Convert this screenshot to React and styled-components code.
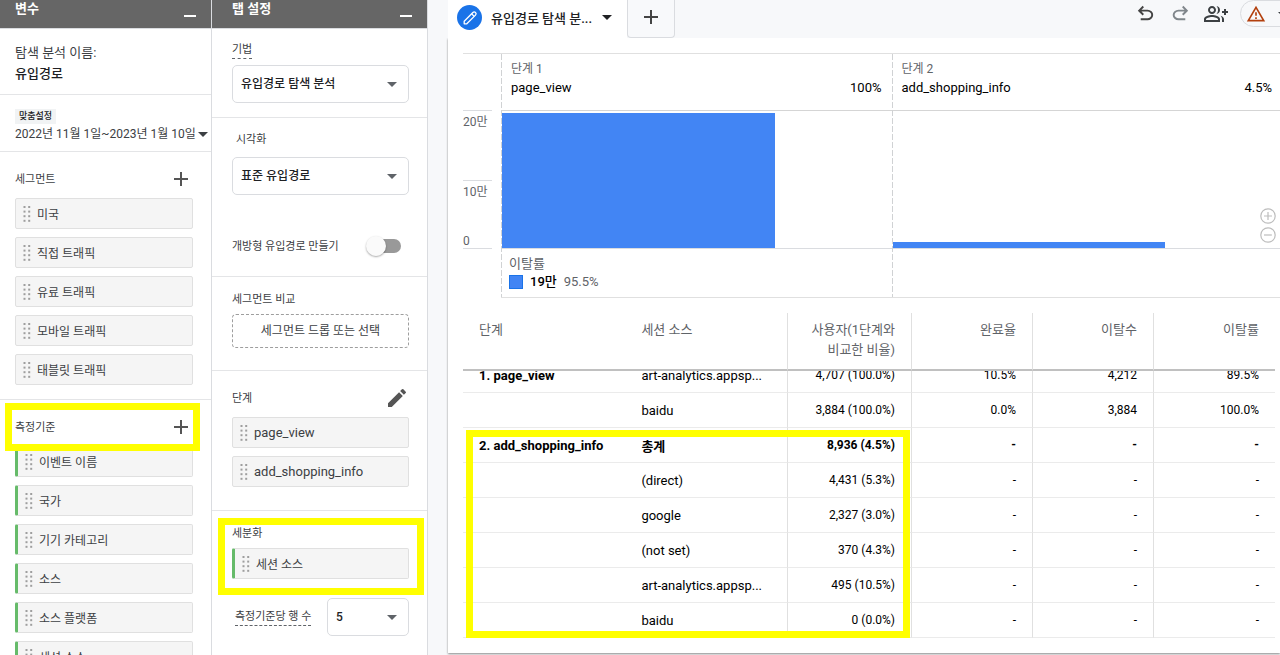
import React, { useLayoutEffect, useRef } from 'react'
import styled, { createGlobalStyle } from 'styled-components'
import {
  MdAdd,
  MdArrowDropDown,
  MdModeEdit,
  MdOutlineGroupAdd,
  MdOutlineWarningAmber,
} from 'react-icons/md'

const GlobalStyle = createGlobalStyle`
  * { box-sizing: border-box; }
  body {
    margin: 0;
    overflow: hidden;
    background-color: #F7F8FA;
    color: #3C4043;
    font-family: Roboto, "Noto Sans CJK KR", sans-serif;
    font-size: 12px;
  }
  button, input, select { font: inherit; color: inherit; }
  svg { display: block; flex: none; }
`
const Page = styled.div`
  display: flex;
  height: 100vh;
  overflow: hidden;
`

/* side panels */
const Panel = styled.aside`
  flex: none;
  width: ${({width}) => width}px;
  overflow: hidden;
  background-color: #FFF;
  border-right: 1px solid #DADCE0;
`
const PanelHeader = styled.header`
  display: flex;
  justify-content: space-between;
  height: 29px;
  padding: 0 15px 0 ${({inset}) => inset}px;
  background-color: #666;
  border-bottom: 1px solid #DADCE0;
  color: #FFF;
  & h2 {
    margin: 0;
    font-size: 13px;
    font-weight: 700;
    line-height: 17px;
  }
`
const Collapse = styled.button`
  width: 12px;
  height: 17px;
  padding: 0;
  background: none;
  border: 0;
  border-bottom: 2px solid #FFF;
`
const Section = styled.section`
  position: relative;
  padding: ${({top}) => top}px 18px ${({bottom}) => bottom || 0}px ${({inset}) => inset}px;
  border-bottom: ${({last}) => last ? 0 : 1}px solid #E4E5E7;
`
const SectionHead = styled.div`
  display: flex;
  align-items: center;
  justify-content: space-between;
  height: 24px;
  margin-bottom: 7px;
  & h3 { padding-top: 2px; }
`
const Title = styled.h3`
  margin: 0;
  font-size: 11px;
  font-weight: 400;
  line-height: 16px;
`
const BlockTitle = styled(Title)`
  margin-bottom: 5px;
  line-height: 18px;
`
const IconButton = styled.button`
  display: flex;
  padding: 0;
  background: none;
  border: 0;
  color: ${({color}) => color || '#555'};
`
const NameLabel = styled.label`
  display: block;
  font-size: 13px;
  line-height: 20px;
`
const NameInput = styled.input`
  display: block;
  width: 100%;
  height: 20px;
  padding: 0 0 2px;
  background: none;
  border: 0;
  outline: 0;
  color: #202124;
  font-size: 13px;
  font-weight: 500;
`
const Chip = styled.div`
  width: max-content;
  padding: 0 4px;
  background-color: #F1F3F4;
  color: #202124;
  font-size: 9px;
  font-weight: 500;
  line-height: 15px;
`
const DateButton = styled.button`
  display: flex;
  align-items: center;
  gap: 2px;
  padding: 0;
  background: none;
  border: 0;
  font-size: 12px;
  line-height: 20px;
  white-space: nowrap;
`
const Caret = styled.span`
  flex: none;
  border: solid transparent;
  border-width: 5px 5px 0;
  border-top-color: ${({color}) => color || '#5F6368'};
`
const List = styled.ul`
  display: grid;
  gap: 8px;
  margin: 0;
  padding: 0;
  list-style: none;
`
const Item = styled.li`
  display: flex;
  align-items: center;
  gap: 4px;
  height: 31px;
  padding-left: 7px;
  background-color: #F5F5F5;
  border: 1px solid #E0E0E0;
  border-left: ${({metric}) => metric ? '3px solid #66BB6A' : '1px solid #E0E0E0'};
  border-radius: 2px;
  font-size: ${({big}) => big ? 13 : 12}px;
  white-space: nowrap;
`
const Field = styled.div`
  display: flex;
  flex-direction: column;
  align-items: flex-start;
  gap: ${({gap}) => gap}px;
`
const FieldLabel = styled.label`
  margin-left: ${({indent}) => indent || 0}px;
  padding-top: 1px;
  border-bottom: ${({hint}) => hint ? '1px dashed #5F6368' : '0'};
  font-size: 11px;
  line-height: 16px;
`
const SelectBox = styled.div`
  position: relative;
  width: ${({width}) => width || '100%'};
  & select {
    width: 100%;
    height: 38px;
    padding: 0 24px 0 8px;
    appearance: none;
    background-color: #FFF;
    border: 1px solid #DADCE0;
    border-radius: 5px;
    color: #202124;
    font-size: 12px;
    font-weight: 500;
  }
  & ${Caret} {
    position: absolute;
    top: 17px;
    right: 12px;
    pointer-events: none;
  }
`
const SwitchRow = styled.div`
  display: flex;
  align-items: center;
  justify-content: space-between;
  height: 24px;
  margin-top: 39px;
  padding-right: 8px;
`
const Switch = styled.input`
  position: relative;
  width: 32px;
  height: 14px;
  margin: 0;
  appearance: none;
  background-color: #999;
  border-radius: 7px;
  &::before {
    content: '';
    position: absolute;
    top: -3px;
    left: -3px;
    width: 20px;
    height: 20px;
    background-color: #FAFAFA;
    border-radius: 50%;
    box-shadow: 0 1px 2px rgba(0, 0, 0, .35);
  }
`
const DropZone = styled.button`
  width: 100%;
  height: 34px;
  padding: 0 0 3px;
  background: none;
  border: 1px dashed #9E9E9E;
  border-radius: 4px;
  font-size: 12px;
`
const RowsField = styled.div`
  display: flex;
  align-items: center;
  justify-content: space-between;
  margin-top: 19px;
`

/* yellow marker frame drawn over a block */
const Marker = styled.div`
  position: absolute;
  top: ${({top}) => top}px;
  right: ${({right}) => right};
  bottom: ${({bottom}) => bottom || 'auto'};
  left: ${({left}) => left}px;
  height: ${({height}) => height ? `${height}px` : 'auto'};
  border: 7px solid #FF0;
  pointer-events: none;
  z-index: 3;
`

/* report */
const Main = styled.main`
  display: flex;
  flex: 1;
  flex-direction: column;
  min-width: 0;
  margin-left: 20px;
`
const TopBar = styled.div`
  display: flex;
  height: 38px;
`
const Tab = styled.button`
  display: flex;
  align-items: center;
  gap: 9px;
  width: 179px;
  padding: 0 0 3px 9px;
  background-color: #FFF;
  border: 0;
  color: #202124;
  font-size: 13px;
  font-weight: 500;
  & ${Caret} { margin-left: 1px; }
`
const Badge = styled.span`
  display: flex;
  align-items: center;
  justify-content: center;
  width: 25px;
  height: 25px;
  background-color: #1A73E8;
  border-radius: 50%;
  color: #FFF;
`
const AddTab = styled.button`
  display: flex;
  align-items: center;
  justify-content: center;
  width: 48px;
  padding: 0 0 3px;
  background-color: #F8F9FB;
  border: 1px solid #DADCE0;
  border-top: 0;
  border-radius: 0 0 4px 4px;
  color: #444;
`
const Actions = styled.div`
  display: flex;
  flex: 1;
  align-items: center;
  justify-content: flex-end;
  gap: 12px;
  height: 27px;
  margin-right: -20px;
`
const Status = styled.button`
  display: flex;
  align-items: center;
  gap: 5px;
  width: 60px;
  height: 27px;
  padding: 0 0 0 5px;
  background: none;
  border: 1px solid #DADCE0;
  border-radius: 14px;
  color: #3C4043;
`
const Card = styled.div`
  display: flex;
  flex: 1;
  flex-direction: column;
  min-height: 0;
  margin-bottom: 2px;
  padding: 15px 0 15px 15px;
  background-color: #FFF;
  box-shadow: 0 1px 2px rgba(0, 0, 0, .45);
  clip-path: inset(0 0 -4px -4px);
`
const Chart = styled.div`
  position: relative;
  display: grid;
  grid-template-columns: 38px 1fr 1fr;
  margin-right: -2px;
`
const Axis = styled.div`
  display: flex;
  flex-direction: column;
  border-top: 1px solid #E0E0E0;
  color: #5F6368;
  font-size: 12px;
`
const Tick = styled.div`
  display: flex;
  flex-direction: column;
  justify-content: space-between;
  width: 29px;
  height: ${({height}) => height}px;
  border-bottom: 1px solid #DADCE0;
  line-height: 22px;
  & span:last-child:not(:first-child) { line-height: 13px; }
`
const Step = styled.div`
  position: relative;
  border-top: 1px solid #E0E0E0;
  border-bottom: 1px solid #E0E0E0;
  &::before {
    content: '';
    position: absolute;
    top: 0;
    bottom: 0;
    left: 0;
    width: 1px;
    background-image: repeating-linear-gradient(#D0D2D4 0 6px, transparent 6px 8px);
  }
`
const StepHead = styled.div`
  height: 57px;
  padding: 6px 10px 0;
  border-bottom: 1px solid #D5D5D5;
`
const StepNo = styled.div`
  color: #5F6368;
  font-size: 12px;
  line-height: 18px;
`
const StepName = styled.div`
  display: flex;
  justify-content: space-between;
  color: #000;
  font-size: 13px;
  line-height: 20px;
`
const Plot = styled.div`
  display: flex;
  align-items: flex-end;
  height: 138px;
  padding-left: 1px;
  border-bottom: 1px solid #DADCE0;
`
const Bar = styled.div`
  width: 70%;
  background-color: #4285F4;
`
const StepFoot = styled.div`
  height: 48px;
  padding: 6px 8px 0;
  font-size: 13px;
  line-height: 18px;
  color: #5F6368;
`
const Legend = styled.div`
  display: flex;
  align-items: center;
  gap: 7px;
  & i {
    width: 14px;
    height: 14px;
    background-color: #4285F4;
    border: 1px solid #1A73E8;
  }
  & b {
    color: #000;
    font-weight: 500;
  }
`
const ZoomButtons = styled.div`
  position: absolute;
  top: 155px;
  right: 6px;
  display: grid;
  gap: 3px;
`
const TableArea = styled.div`
  position: relative;
  flex: 1;
  min-height: 0;
  margin: 15px 5px 0 0;
`
const Scroller = styled.div`
  height: 100%;
  overflow-y: auto;
  scrollbar-width: none;
`
const Table = styled.table`
  width: 100%;
  border-collapse: separate;
  border-spacing: 0;
  table-layout: fixed;
  color: #000;
  font-size: 13px;
`
const HeadCell = styled.th`
  position: sticky;
  top: 0;
  z-index: 1;
  width: ${({w}) => w};
  height: 58px;
  padding: 7px 16px 0;
  background-color: #FFF;
  border-right: ${({line}) => line ? 1 : 0}px solid #E0E0E0;
  border-bottom: 2px solid #C0C0C0;
  color: #5F6368;
  font-weight: 400;
  line-height: 20px;
  text-align: ${({num}) => num ? 'right' : 'left'};
  vertical-align: top;
  word-break: keep-all;
`
const Cell = styled.td`
  height: 35px;
  padding: 0 ${({flush}) => flush ? 0 : 16}px 0 16px;
  border-right: ${({line}) => line ? 1 : 0}px solid #E0E0E0;
  border-bottom: 1px solid #EBEBEB;
  font-weight: ${({bold}) => bold ? 700 : 400};
  font-size: ${({num}) => num ? 12 : 13}px;
  text-align: ${({num}) => num ? 'right' : 'left'};
  white-space: nowrap;
`

const segments = ['미국', '직접 트래픽', '유료 트래픽', '모바일 트래픽', '태블릿 트래픽']
const dimensions = ['이벤트 이름', '국가', '기기 카테고리', '소스', '소스 플랫폼', '세션 소스']

const steps = [
  { no: '단계 1', name: 'page_view', rate: '100%', height: 135, lost: '19만', lostRate: '95.5%' },
  { no: '단계 2', name: 'add_shopping_info', rate: '4.5%', height: 6 },
]

const columns = [
  { name: '단계', w: '20%' },
  { name: '세션 소스', w: '20%', line: true },
  { name: '사용자(1단계와 비교한 비율)', w: '15.3%', line: true, num: true },
  { name: '완료율', w: '14.9%', line: true, num: true },
  { name: '이탈수', w: '14.9%', line: true, num: true },
  { name: '이탈률', w: '14.9%', num: true },
]

const rows = [
  ['1. page_view', 'art-analytics.appsp...', '4,707 (100.0%)', '10.5%', '4,212', '89.5%'],
  ['', 'baidu', '3,884 (100.0%)', '0.0%', '3,884', '100.0%'],
  ['2. add_shopping_info', '총계', '8,936 (4.5%)', '-', '-', '-'],
  ['', '(direct)', '4,431 (5.3%)', '-', '-', '-'],
  ['', 'google', '2,327 (3.0%)', '-', '-', '-'],
  ['', '(not set)', '370 (4.3%)', '-', '-', '-'],
  ['', 'art-analytics.appsp...', '495 (10.5%)', '-', '-', '-'],
  ['', 'baidu', '0 (0.0%)', '-', '-', '-'],
]
const totalRow = 2

const Grip = () => (
  <svg width="10" height="16" viewBox="0 0 10 16" fill="#9E9E9E">
    {[0, 1, 2, 3].map(i => (
      <g key={i}>
        <rect x="0.5" y={i * 4.6} width="2" height="2" />
        <rect x="5.2" y={i * 4.6} width="2" height="2" />
      </g>
    ))}
  </svg>
)

const PencilOutline = () => (
  <svg width="16" height="16" viewBox="0 0 16 16" fill="none" stroke="currentColor" strokeWidth="1.3" strokeLinejoin="round">
    <path d="M2.2 13.8v-2.6l8.7-8.7a1.8 1.8 0 0 1 2.6 2.6l-8.7 8.7z" />
    <path d="M9.6 3.8l2.6 2.6" />
  </svg>
)

const Undo = () => (
  <svg width="23" height="23" viewBox="0 -960 960 960" fill="currentColor">
    <path d="M280-200v-80h284q63 0 109.5-40T720-420q0-60-46.5-100T564-560H312l104 104-56 56-200-200 200-200 56 56-104 104h252q97 0 169.5 63T800-420q0 94-72.5 157T564-200H280Z" />
  </svg>
)

const Redo = () => (
  <svg width="23" height="23" viewBox="0 -960 960 960" fill="currentColor">
    <path d="M396-200q-97 0-169.5-63T154-420q0-94 72.5-157T396-640h252L544-744l56-56 200 200-200 200-56-56 104-104H396q-63 0-109.5 40T234-420q0 60 53 100T396-280h284v80H396Z" />
  </svg>
)

const CircleIcon = ({plus}) => (
  <svg width="16" height="16" viewBox="0 0 16 16" fill="none" stroke="currentColor" strokeWidth="1.2">
    <circle cx="8" cy="8" r="7.2" />
    <path d={plus ? 'M4 8h8M8 4v8' : 'M4 8h8'} />
  </svg>
)

const ItemList = ({items, metric, big}) => (
  <List>
    {items.map(name => (
      <Item key={name} metric={metric} big={big}>
        <Grip />
        <span>{name}</span>
      </Item>
    ))}
  </List>
)

const Select = ({id, value, width}) => (
  <SelectBox width={width}>
    <select id={id} defaultValue={value}>
      <option>{value}</option>
    </select>
    <Caret />
  </SelectBox>
)

const Variables = () => (
  <Panel width={212}>
    <PanelHeader inset={15}>
      <h2>변수</h2>
      <Collapse aria-label="변수 접기" />
    </PanelHeader>
    <Section inset={15} top={14} bottom={11}>
      <NameLabel htmlFor="name">탐색 분석 이름:</NameLabel>
      <NameInput id="name" defaultValue="유입경로" />
    </Section>
    <Section inset={15} top={14} bottom={7}>
      <Chip>맞춤설정</Chip>
      <DateButton>
        2022년 11월 1일~2023년 1월 10일
        <Caret color="#3C4043" />
      </DateButton>
    </Section>
    <Section inset={15} top={15} bottom={14}>
      <SectionHead>
        <Title>세그먼트</Title>
        <IconButton aria-label="세그먼트 추가"><MdAdd size={24} /></IconButton>
      </SectionHead>
      <ItemList items={segments} />
    </Section>
    <Section inset={15} top={15} last>
      <Marker top={3} left={5} right="11px" height={48} />
      <SectionHead>
        <Title>측정기준</Title>
        <IconButton aria-label="측정기준 추가"><MdAdd size={24} /></IconButton>
      </SectionHead>
      <ItemList items={dimensions} metric />
    </Section>
  </Panel>
)

const Settings = () => (
  <Panel width={216}>
    <PanelHeader inset={20}>
      <h2>탭 설정</h2>
      <Collapse aria-label="탭 설정 접기" />
    </PanelHeader>
    <Section inset={20} top={12} bottom={14}>
      <Field gap={6}>
        <FieldLabel htmlFor="technique" hint>기법</FieldLabel>
        <Select id="technique" value="유입경로 탐색 분석" />
      </Field>
    </Section>
    <Section inset={20} top={13} bottom={18}>
      <Field gap={9}>
        <FieldLabel htmlFor="visual" indent={4}>시각화</FieldLabel>
        <Select id="visual" value="표준 유입경로" />
      </Field>
      <SwitchRow>
        <FieldLabel htmlFor="open">개방형 유입경로 만들기</FieldLabel>
        <Switch id="open" type="checkbox" role="switch" />
      </SwitchRow>
    </Section>
    <Section inset={20} top={14} bottom={22}>
      <BlockTitle>세그먼트 비교</BlockTitle>
      <DropZone>세그먼트 드롭 또는 선택</DropZone>
    </Section>
    <Section inset={20} top={15} bottom={23}>
      <SectionHead>
        <Title>단계</Title>
        <IconButton aria-label="단계 수정"><MdModeEdit size={24} /></IconButton>
      </SectionHead>
      <ItemList items={steps.map(({name}) => name)} big />
    </Section>
    <Section inset={20} top={14} last>
      <Marker top={7} left={6} right="3px" height={77} />
      <BlockTitle>세분화</BlockTitle>
      <ItemList items={['세션 소스']} metric />
      <RowsField>
        <FieldLabel htmlFor="count" indent={3} hint>측정기준당 행 수</FieldLabel>
        <Select id="count" value="5" width="82px" />
      </RowsField>
    </Section>
  </Panel>
)

const Funnel = () => (
  <Chart>
    <Axis>
      <Tick height={57} />
      <Tick height={70}><span>20만</span></Tick>
      <Tick height={68}><span>10만</span><span>0</span></Tick>
    </Axis>
    {steps.map(step => (
      <Step key={step.no}>
        <StepHead>
          <StepNo>{step.no}</StepNo>
          <StepName>
            <span>{step.name}</span>
            <span>{step.rate}</span>
          </StepName>
        </StepHead>
        <Plot>
          <Bar style={{ height: step.height }} />
        </Plot>
        <StepFoot>
          {step.lost && (
            <>
              <div>이탈률</div>
              <Legend>
                <i />
                <b>{step.lost}</b>
                <span>{step.lostRate}</span>
              </Legend>
            </>
          )}
        </StepFoot>
      </Step>
    ))}
    <ZoomButtons>
      <IconButton color="#BDBDBD" aria-label="확대"><CircleIcon plus /></IconButton>
      <IconButton color="#BDBDBD" aria-label="축소"><CircleIcon /></IconButton>
    </ZoomButtons>
  </Chart>
)

const Report = () => {
  const scroller = useRef(null)

  // open on the last rows
  useLayoutEffect(() => {
    scroller.current.scrollTop = scroller.current.scrollHeight
  }, [])

  return (
    <TableArea>
      <Scroller ref={scroller}>
        <Table>
          <thead>
            <tr>
              {columns.map(({name, ...col}) => (
                <HeadCell key={name} {...col}>{name}</HeadCell>
              ))}
            </tr>
          </thead>
          <tbody>
            {rows.map((row, r) => (
              <tr key={r}>
                {row.map((text, c) => (
                  <Cell
                    key={c}
                    num={columns[c].num}
                    line={columns[c].line}
                    flush={c < 2}
                    bold={c === 0 || r === totalRow}>
                      {text}
                  </Cell>
                ))}
              </tr>
            ))}
          </tbody>
        </Table>
      </Scroller>
      <Marker top={117} left={3} right="45%" bottom="0" />
    </TableArea>
  )
}

export default () => (
  <Page>
    <GlobalStyle />
    <Variables />
    <Settings />
    <Main>
      <TopBar>
        <Tab>
          <Badge><PencilOutline /></Badge>
          <span>유입경로 탐색 분...</span>
          <Caret color="#202124" />
        </Tab>
        <AddTab aria-label="탭 추가"><MdAdd size={24} /></AddTab>
        <Actions>
          <IconButton color="#444" aria-label="실행취소"><Undo /></IconButton>
          <IconButton color="#80868B" aria-label="다시 실행"><Redo /></IconButton>
          <IconButton color="#3C4043" aria-label="공유"><MdOutlineGroupAdd size={24} /></IconButton>
          <Status aria-label="데이터 상태">
            <MdOutlineWarningAmber size={20} color="#B3400E" />
            <MdArrowDropDown size={24} />
          </Status>
        </Actions>
      </TopBar>
      <Card>
        <Funnel />
        <Report />
      </Card>
    </Main>
  </Page>
)
